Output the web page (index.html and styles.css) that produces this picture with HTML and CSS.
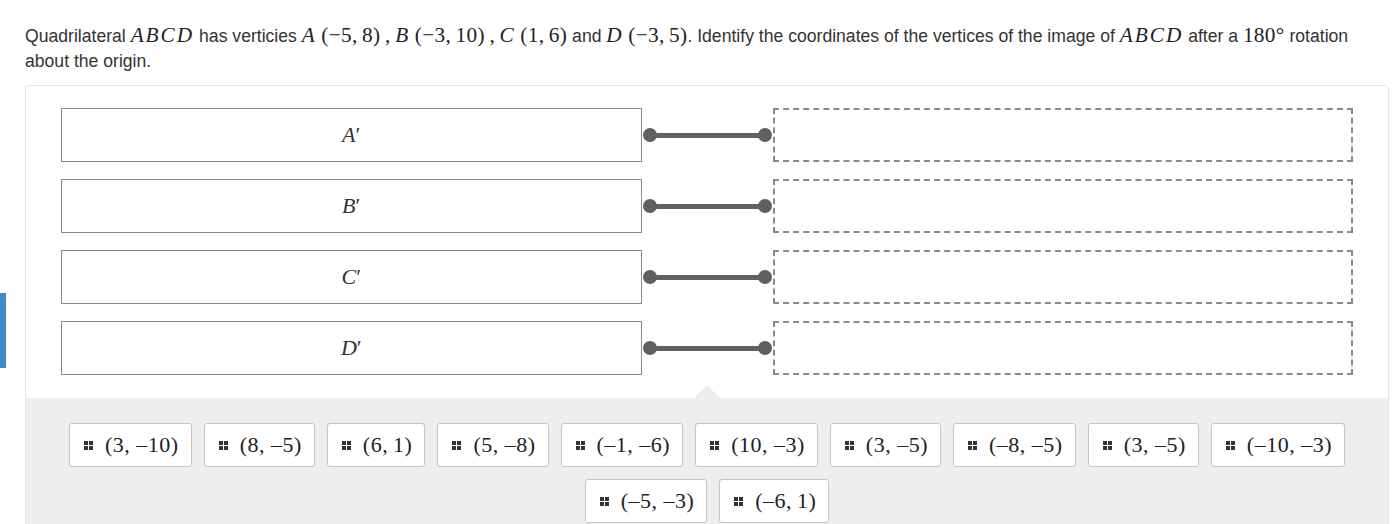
FILE: index.html
```html
<!DOCTYPE html>
<html lang="en">
<head>
<meta charset="utf-8">
<title>Matching question</title>
<link rel="stylesheet" href="styles.css">
</head>
<body>
<div class="side-tab"></div>
<main class="page">
  <p class="question">Quadrilateral <span class="m"><i>ABCD</i></span> has verticies <span class="m"><i>A</i>&#8201;(−5,&#8201;8)&#8201;,&#8201;<i>B</i>&#8201;(−3,&#8201;10)&#8201;,&#8201;<i>C</i>&#8201;(1,&#8201;6)</span> and <span class="m"><i>D</i>&#8201;(−3,&#8201;5)</span>. Identify the coordinates of the vertices of the image of <span class="m"><i>ABCD</i></span> after a <span class="m">180°</span> rotation about the origin.</p>

  <section class="match">
    <div class="pairs">
      <div class="pair">
        <div class="prompt"><span class="m"><i>A</i>′</span></div>
        <div class="connector"><span class="dot"></span><span class="bar"></span><span class="dot"></span></div>
        <div class="drop"></div>
      </div>
      <div class="pair">
        <div class="prompt"><span class="m"><i>B</i>′</span></div>
        <div class="connector"><span class="dot"></span><span class="bar"></span><span class="dot"></span></div>
        <div class="drop"></div>
      </div>
      <div class="pair">
        <div class="prompt"><span class="m"><i>C</i>′</span></div>
        <div class="connector"><span class="dot"></span><span class="bar"></span><span class="dot"></span></div>
        <div class="drop"></div>
      </div>
      <div class="pair">
        <div class="prompt"><span class="m"><i>D</i>′</span></div>
        <div class="connector"><span class="dot"></span><span class="bar"></span><span class="dot"></span></div>
        <div class="drop"></div>
      </div>
    </div>

    <div class="tray">
      <div class="chip"><span class="grip"><i></i><i></i><i></i><i></i></span><span class="cm">(3, –10)</span></div>
      <div class="chip"><span class="grip"><i></i><i></i><i></i><i></i></span><span class="cm">(8, –5)</span></div>
      <div class="chip"><span class="grip"><i></i><i></i><i></i><i></i></span><span class="cm">(6,&#8201;1)</span></div>
      <div class="chip"><span class="grip"><i></i><i></i><i></i><i></i></span><span class="cm">(5, –8)</span></div>
      <div class="chip"><span class="grip"><i></i><i></i><i></i><i></i></span><span class="cm">(–1, –6)</span></div>
      <div class="chip"><span class="grip"><i></i><i></i><i></i><i></i></span><span class="cm">(10, –3)</span></div>
      <div class="chip"><span class="grip"><i></i><i></i><i></i><i></i></span><span class="cm">(3, –5)</span></div>
      <div class="chip"><span class="grip"><i></i><i></i><i></i><i></i></span><span class="cm">(–8, –5)</span></div>
      <div class="chip"><span class="grip"><i></i><i></i><i></i><i></i></span><span class="cm">(3, –5)</span></div>
      <div class="chip"><span class="grip"><i></i><i></i><i></i><i></i></span><span class="cm">(–10, –3)</span></div>
      <div class="chip"><span class="grip"><i></i><i></i><i></i><i></i></span><span class="cm">(–5, –3)</span></div>
      <div class="chip"><span class="grip"><i></i><i></i><i></i><i></i></span><span class="cm">(–6,&#8201;1)</span></div>
    </div>
  </section>
</main>
</body>
</html>
```

FILE: styles.css
```css
html, body {
  margin: 0;
  padding: 0;
  background: #fff;
}

body {
  font-family: "Liberation Sans", Arial, sans-serif;
  font-size: 17.6px;
  color: #333;
}

.side-tab {
  position: absolute;
  left: 0;
  top: 293px;
  width: 6px;
  height: 75px;
  background: #428bca;
}

.page {
  padding: 24px 9px 0 25px;
}

.question {
  margin: 0;
  line-height: 25px;
}

.m {
  font-family: "Liberation Serif", "Times New Roman", serif;
  font-size: 1.21em;
  line-height: 1;
  color: #222;
}

.question .m {
  letter-spacing: 0.3px;
}

.question .m i {
  font-style: italic;
  letter-spacing: 2px;
}

.match {
  margin-top: 11px;
  border: 1px solid #e6e6e6;
  border-radius: 4px;
}

.pairs {
  display: flex;
  flex-direction: column;
  gap: 17px;
  padding: 22px 35px 23px;
}

.pair {
  display: grid;
  grid-template-columns: 1fr 131px 1fr;
  height: 54px;
}

.prompt {
  border: 1px solid #8a8a8a;
  display: flex;
  align-items: center;
  justify-content: center;
  background: #fff;
}

.prompt .m {
  font-size: 22px;
  color: #333;
}

.connector {
  display: flex;
  align-items: center;
  padding: 0 1px;
}

.connector .dot {
  width: 14px;
  height: 14px;
  border-radius: 50%;
  background: #606060;
  flex: none;
}

.connector .bar {
  flex: 1;
  height: 5px;
  background: #606060;
  margin: 0 -3px;
}

.drop {
  border: 2px dashed #8a8a8a;
}

.tray {
  position: relative;
  background: #eeeeee;
  padding: 25px 30px 30px;
  display: flex;
  flex-wrap: wrap;
  justify-content: center;
  gap: 12px 12px;
}

.tray::before {
  content: "";
  position: absolute;
  top: -13px;
  left: 50%;
  margin-left: -13px;
  border-left: 13px solid transparent;
  border-right: 13px solid transparent;
  border-bottom: 13px solid #eeeeee;
}

.chip {
  height: 44px;
  box-sizing: border-box;
  display: flex;
  align-items: center;
  gap: 12px;
  padding: 0 12px 0 14px;
  background: #fff;
  border: 1px solid #c4c4c4;
  border-radius: 3px;
}

.grip {
  display: grid;
  grid-template-columns: 4px 4px;
  gap: 1px;
}

.grip i {
  display: block;
  width: 4px;
  height: 4px;
  background: #333;
}

.cm {
  font-family: "Liberation Serif", "Times New Roman", serif;
  font-size: 22px;
  color: #222;
  letter-spacing: 0.5px;
}
```
